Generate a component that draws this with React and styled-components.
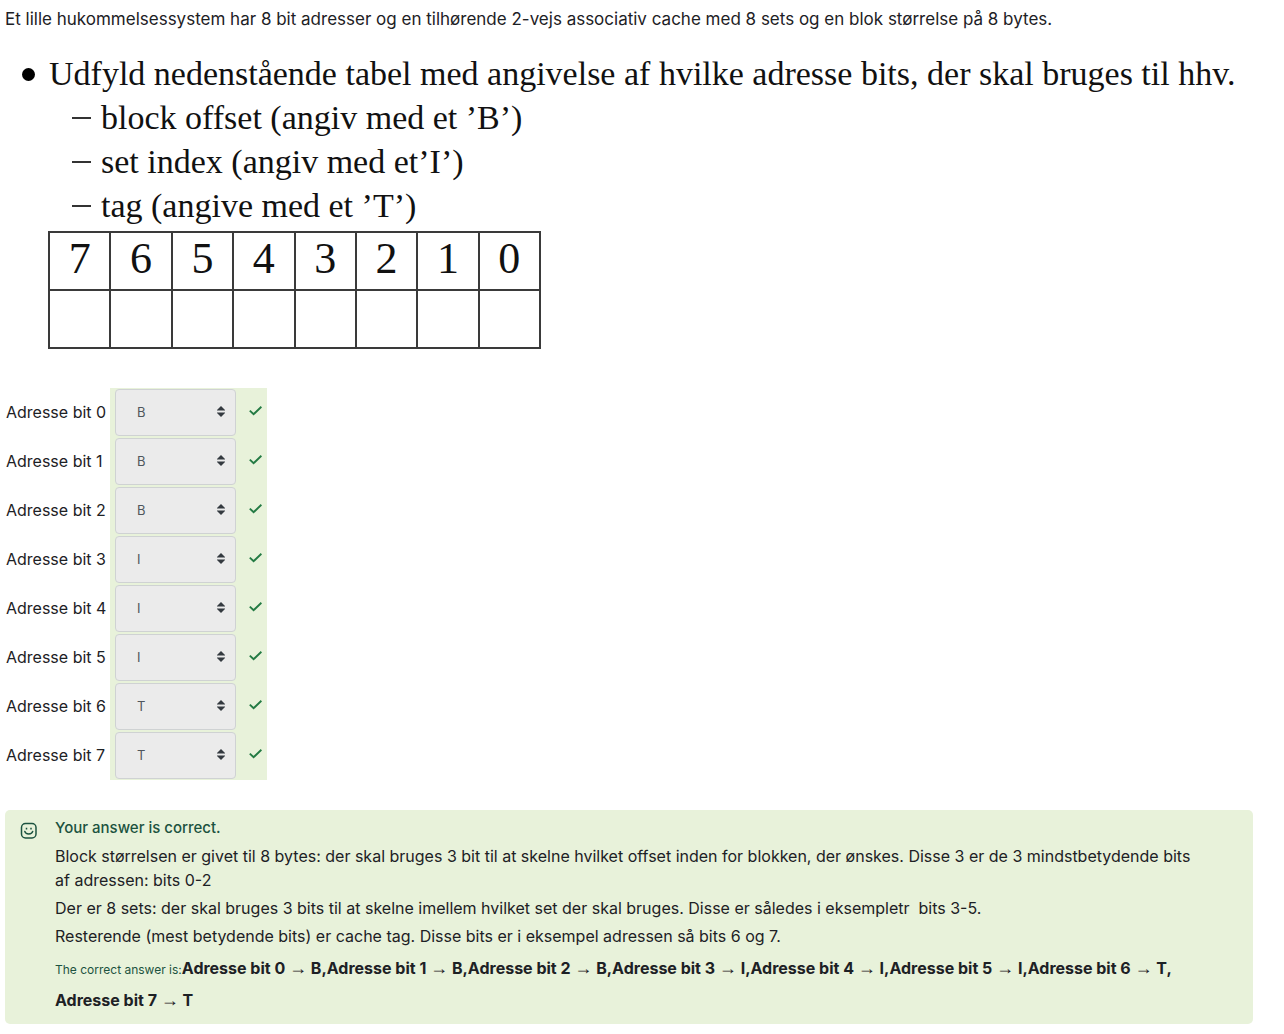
import React from "react";
import styled, { createGlobalStyle } from "styled-components";

const GlobalStyle = createGlobalStyle`
  *, *::before, *::after { box-sizing: border-box; }
  body {
    margin: 0;
    background: #fff;
    color: #1d2125;
    font-family: Inter, "Open Sans", sans-serif;
    font-size: 16px;
    line-height: 24px;
  }
`;

const Page = styled.main`
  padding: 7px 31px 8px 5px;
`;

const Intro = styled.p`
  margin: 0;
  font-size: 17px;
`;

const Task = styled.section`
  margin-top: 21px;
  color: #111;
  font-family: "Liberation Serif", serif;
  font-size: 34px;
  line-height: 44px;
`;

const TaskTitle = styled.p`
  display: flex;
  align-items: center;
  gap: 14px;
  margin: 0;
  padding-left: 17px;
  white-space: nowrap;

  &::before {
    content: "";
    width: 13px;
    height: 13px;
    border-radius: 50%;
    background: #000;
  }
`;

const TaskList = styled.ul`
  margin: 0;
  padding-left: 67px;
  list-style: none;
`;

const TaskItem = styled.li`
  display: flex;
  align-items: center;
  gap: 10px;

  &::before {
    content: "";
    width: 19px;
    height: 2px;
    background: #333;
  }
`;

const BitTable = styled.table`
  width: 493px;
  margin: 3px 0 0 43px;
  border-collapse: collapse;
  table-layout: fixed;
  font-size: 44px;
`;

const BitCell = styled.td`
  height: 58px;
  padding: 0 0 4px;
  border: 2px solid #3a3a3a;
  font-weight: 400;
  line-height: 48px;
  text-align: center;
`;

const AnswerTable = styled.table`
  margin-top: 39px;
  border-collapse: collapse;
`;

const LabelCell = styled.td`
  width: 105px;
  padding: 0 0 2px 1px;
  white-space: nowrap;
`;

const ControlCell = styled.td`
  padding: 1px 5px;
  background: #e8f2da;
`;

const Control = styled.div`
  display: flex;
  align-items: center;
  gap: 13px;

  > svg {
    margin-bottom: 4px;
  }
`;

const SelectBox = styled.div`
  position: relative;

  svg {
    position: absolute;
    top: 17px;
    right: 11px;
    pointer-events: none;
  }
`;

const Select = styled.select`
  display: block;
  width: 121px;
  height: 47px;
  padding: 0 28px 2px 21px;
  border: 1px solid #cfd2d3;
  border-radius: 4px;
  background: #ebebeb;
  color: #50565c;
  font-family: inherit;
  font-size: 13px;
  appearance: none;
  opacity: 1;
`;

const Feedback = styled.section`
  display: flex;
  gap: 18px;
  margin-top: 30px;
  padding: 6px 16px 8px 15px;
  border-radius: 5px;
  background: #e8f2da;

  > svg {
    flex: none;
    margin-top: 6px;
  }
`;

const FeedbackBody = styled.div`
  display: flex;
  flex: 1;
  flex-direction: column;
  gap: 4px;
  min-width: 0;
`;

const Verdict = styled.p`
  margin: 0;
  color: #1c5340;
  font-size: 15px;
  font-weight: 500;
`;

const Explanation = styled.p`
  margin: 0;
`;

const RightAnswer = styled.p`
  margin: 0;
  line-height: 32px;
`;

const AnswerLead = styled.span`
  color: #1c5340;
  font-size: 12px;
  line-height: 1;
`;

const Match = styled.strong`
  font-weight: 700;
  white-space: nowrap;
`;

const Arrow = styled.span`
  font-family: "Liberation Serif", serif;
  font-size: 18px;
  font-weight: 400;
  line-height: 1;
`;

const answers = ["B", "B", "B", "I", "I", "I", "T", "T"];

const explanations = [
  "Block størrelsen er givet til 8 bytes: der skal bruges 3 bit til at skelne hvilket offset inden for blokken, der ønskes. Disse 3 er de 3 mindstbetydende bits af\u00a0adressen: bits 0-2",
  "Der er 8 sets: der skal bruges 3 bits til at skelne imellem hvilket set der skal bruges. Disse er således i eksempletr\u00a0 bits 3-5.",
  "Resterende (mest betydende bits) er cache tag. Disse bits er i eksempel adressen så bits 6 og 7.",
];

const SortArrows = () => (
  <svg width="8" height="11" viewBox="0 0 8 11" aria-hidden="true">
    <path d="M4 0 8 4V4.5H0V4ZM4 11 0 7V6.5H8V7Z" fill="#343a40" />
  </svg>
);

const Check = () => (
  <svg width="13" height="12" viewBox="0 0 13 12" role="img" aria-label="Correct">
    <path d="M0.8 5.6 4.6 9.2 12.4 1.8" fill="none" stroke="#237a43" strokeWidth="1.9" />
  </svg>
);

const Smiley = () => (
  <svg width="17" height="17" viewBox="0 0 17 17" fill="none" stroke="#1c5340" strokeWidth="1.5" aria-hidden="true">
    <rect x="1.5" y="1.5" width="14.5" height="14.5" rx="4" />
    <path d="M4.8 9.4C5.6 12.8 11.9 12.8 12.7 9.4" strokeLinecap="round" />
    <path d="M6.5 5.8V7.4M11 5.8V7.4" />
  </svg>
);

export default function App() {
  return (
    <>
      <GlobalStyle />
      <Page>
        <Intro>
          Et lille hukommelsessystem har 8 bit adresser og en tilhørende 2-vejs associativ cache med 8 sets og en
          blok størrelse på 8 bytes.
        </Intro>

        <Task>
          <TaskTitle>
            Udfyld nedenstående tabel med angivelse af hvilke adresse bits, der skal bruges til hhv.
          </TaskTitle>
          <TaskList>
            <TaskItem>block offset (angiv med et ’B’)</TaskItem>
            <TaskItem>set index (angiv med et’I’)</TaskItem>
            <TaskItem>tag (angive med et ’T’)</TaskItem>
          </TaskList>
          <BitTable>
            <thead>
              <tr>
                {[7, 6, 5, 4, 3, 2, 1, 0].map((bit) => (
                  <BitCell as="th" key={bit} scope="col">{bit}</BitCell>
                ))}
              </tr>
            </thead>
            <tbody>
              <tr>
                {[7, 6, 5, 4, 3, 2, 1, 0].map((bit) => (
                  <BitCell key={bit} />
                ))}
              </tr>
            </tbody>
          </BitTable>
        </Task>

        <AnswerTable>
          <tbody>
            {answers.map((answer, bit) => (
              <tr key={bit}>
                <LabelCell>
                  <label htmlFor={`bit-${bit}`}>Adresse bit {bit}</label>
                </LabelCell>
                <ControlCell>
                  <Control>
                    <SelectBox>
                      <Select id={`bit-${bit}`} defaultValue={answer} disabled>
                        <option>B</option>
                        <option>I</option>
                        <option>T</option>
                      </Select>
                      <SortArrows />
                    </SelectBox>
                    <Check />
                  </Control>
                </ControlCell>
              </tr>
            ))}
          </tbody>
        </AnswerTable>

        <Feedback>
          <Smiley />
          <FeedbackBody>
            <Verdict>Your answer is correct.</Verdict>
            {explanations.map((text) => (
              <Explanation key={text}>{text}</Explanation>
            ))}
            <RightAnswer>
              <AnswerLead>The correct answer is:</AnswerLead>
              {answers.map((answer, bit) => (
                <React.Fragment key={bit}>
                  <Match>
                    Adresse bit {bit} <Arrow>→</Arrow> {answer}
                    {bit < answers.length - 1 ? "," : ""}
                  </Match>
                  <wbr />
                </React.Fragment>
              ))}
            </RightAnswer>
          </FeedbackBody>
        </Feedback>
      </Page>
    </>
  );
}
